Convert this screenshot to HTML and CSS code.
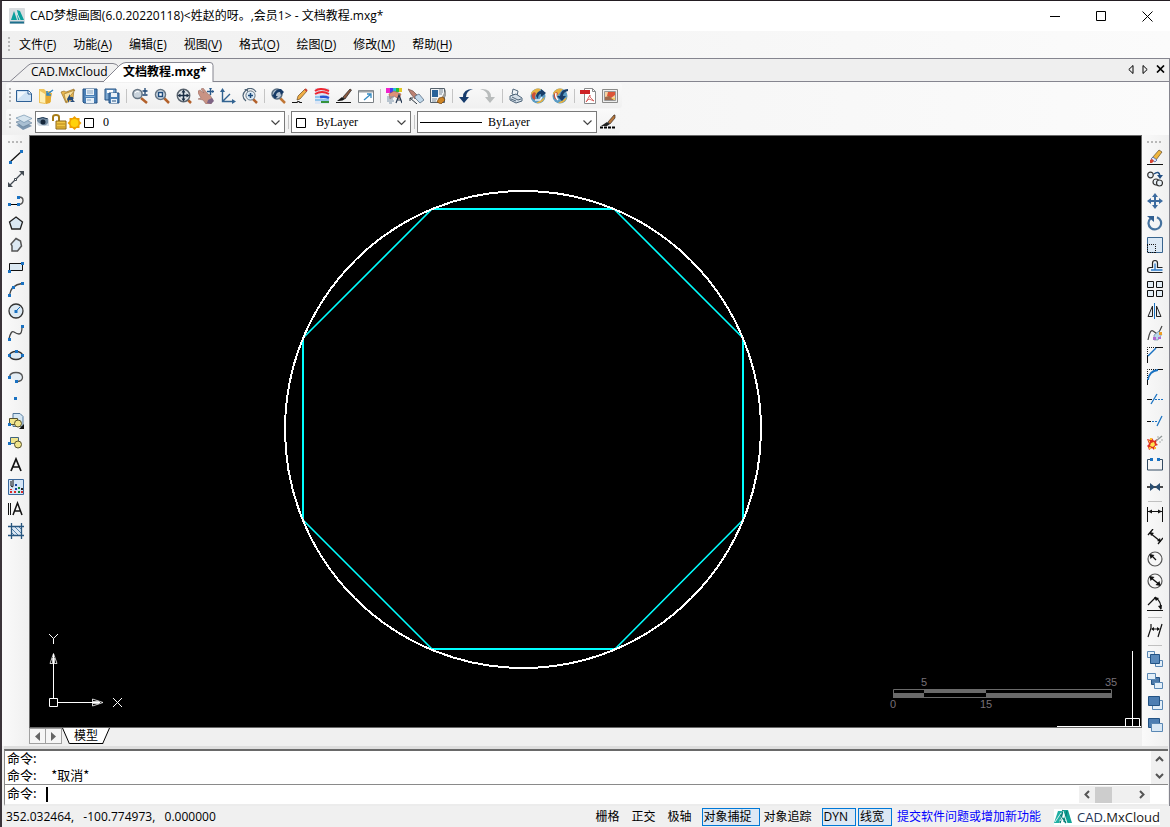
FILE: index.html
```html
<!DOCTYPE html>
<html lang="zh-CN">
<head>
<meta charset="utf-8">
<title>CAD梦想画图</title>
<link rel="stylesheet" href="styles.css">
</head>
<body>
<div class="window">
  <header class="titlebar">
    <svg class="app-icon" width="16" height="16" viewBox="0 0 16 16"><rect width="16" height="16" rx="1" fill="#d9dde0"/><path d="M1 13.500h14v2H1z" fill="#1c6f8d"/><path d="M2 12L5 3l3 9zM8 2l3 1-2 4zM8 7l3-4 4 9H9z" fill="#0c9f9c"/><path d="M7 3l4 9" stroke="#d5eeee"/></svg>
    <h1 class="title">CAD梦想画图(6.0.20220118)&lt;姓赵的呀。,会员1&gt; - 文档教程.mxg*</h1>
    <div class="window-buttons">
      <button aria-label="最小化"><svg width="11" height="11"><path d="M0 5.500h10" stroke="#000"/></svg></button>
      <button aria-label="最大化"><svg width="11" height="11"><path d="M.5.500h9v9h-9z" fill="none" stroke="#000"/></svg></button>
      <button aria-label="关闭"><svg width="11" height="11"><path d="M.5.500l10 10m0-10l-10 10" stroke="#000"/></svg></button>
    </div>
  </header>

  <nav class="menubar">
    <span class="grip grip-v"></span>
    <button>文件(<u>F</u>)</button><button>功能(<u>A</u>)</button><button>编辑(<u>E</u>)</button><button>视图(<u>V</u>)</button><button>格式(<u>O</u>)</button><button>绘图(<u>D</u>)</button><button>修改(<u>M</u>)</button><button>帮助(<u>H</u>)</button>
  </nav>

  <div class="frame">
    <div class="tabs">
      <button class="tab tab-idle"><svg class="tab-shape" width="115" height="19"><path d="M0 18.500L18 2.500Q20 .5 23 .5h80q4 0 6 4" fill="#f0f0f0" stroke="#85858f"/></svg><span>CAD.MxCloud</span></button>
      <button class="tab tab-active"><svg class="tab-shape" width="112" height="20"><path d="M0 20L17 3Q20 .5 23 .5h84q3 0 3 3V20" fill="#fff" stroke="#85858f"/></svg><span>文档教程.mxg*</span></button>
      <div class="tab-tools">
        <button aria-label="上一个"><svg width="6" height="9"><path d="M5 .5v8L.8 4.500z" fill="none" stroke="#000"/></svg></button>
        <button aria-label="下一个"><svg width="6" height="9"><path d="M1 .5v8l4.200-4z" fill="none" stroke="#000"/></svg></button>
        <button aria-label="关闭文档"><svg width="9" height="8"><path d="M1 .5l7 7m0-7l-7 7" stroke="#000" stroke-width="1.700"/></svg></button>
      </div>
    </div>

    <div class="toolbars">
      <div class="toolbar">
        <span class="grip grip-v"></span>
        <button aria-label="新建"><svg class="i" viewBox="0 0 16 16"><path d="M.5 2.500h12l3 3v8H.5z" fill="#cfe2f3" stroke="#2d5f95"/><path d="M2 4h8L2 11z" fill="#f1f7fc"/><path d="M12 2.500v3.500h3.500" fill="#fff" stroke="#2d5f95"/></svg></button>
        <button aria-label="打开"><svg class="i" viewBox="0 0 16 16"><path d="M1 1h5l2 2h5v11l-6 2-6-1z" fill="#eec45d"/><path d="M2 3l5 3v9l-5-1z" fill="#fff0b5"/><path d="M8 6l6-1-2 10-4 1z" fill="#e3a831"/><path d="M9 6.500L15 2M9 3v4h4" fill="none" stroke="#2f86c4" stroke-width="1.500"/></svg></button>
        <button aria-label="打开云图"><svg class="i" viewBox="0 0 16 16"><path d="M1 4l3-1 2 1 8-3-1 10-7 4z" fill="#e9b850" stroke="#8b6319" stroke-width=".6"/><path d="M4 6l11-4-4 5-5 7z" fill="#fbe2a0" stroke="#946b20" stroke-width=".6"/><path d="M7 11l3-5v3c3-1 4 1 3 3l2 2h-5l2-2H9v3z" fill="#264b78"/></svg></button>
        <button aria-label="保存"><svg class="i" viewBox="0 0 16 16"><path d="M1 1h14v14H2l-1-1z" fill="#4a7fb5" stroke="#245384"/><path d="M4 1h8v6H4zM4 10h8v5H4z" fill="#e9f1f8"/><path d="M5 3h6M5 5h6M5 12h4" stroke="#8ba9c6"/><path d="M3.500 8.500h9" stroke="#92bde2"/></svg></button>
        <button aria-label="另存为"><svg class="i" viewBox="0 0 16 16"><path d="M1 1h11v11H1z" fill="#7ba6cf" stroke="#245384"/><path d="M3 2h6v3H3z" fill="#fff"/><path d="M5 5h10v10H5z" fill="#4a7fb5" stroke="#245384"/><path d="M7 5h6v4H7zM7 11h6v4H7z" fill="#e9f1f8"/><path d="M8 13h4" stroke="#245384"/></svg></button>
        <span class="sep"></span>
        <button aria-label="实时缩放"><svg class="i" viewBox="0 0 16 16"><path d="M9 10l6 5" stroke="#b3612b" stroke-width="2.500"/><circle cx="5.500" cy="6" r="4.600" fill="#c9d3dc" stroke="#667583" stroke-width="1.500"/><path d="M3 5q2-3 4-1" stroke="#fff" fill="none"/><path d="M13 0v6M10.500 3h5M10.500 7h5" stroke="#1b426f" stroke-width="1.300"/></svg></button>
        <button aria-label="窗口缩放"><svg class="i" viewBox="0 0 16 16"><path d="M10 10l5 5" stroke="#b3612b" stroke-width="2.500"/><circle cx="6.500" cy="6.500" r="5" fill="#dce6ef" stroke="#667583" stroke-width="1.500"/><path d="M4.500 4.500h4v4h-4z" fill="#fff" stroke="#1d4b7c" stroke-width="1.500"/></svg></button>
        <button aria-label="范围缩放"><svg class="i" viewBox="0 0 16 16"><path d="M12 12l3 3" stroke="#b3612b" stroke-width="2.500"/><circle cx="7.500" cy="7.500" r="6.200" fill="#e2e7eb" stroke="#59636d" stroke-width="1.500"/><path d="M7.500 3v9M3 7.500h9" stroke="#1b2f45" stroke-width="1.500"/><path d="M7.500 1.500l2 3h-4zM7.500 13.500l2-3h-4zM1.500 7.500l3-2v4zM13.500 7.500l-3-2v4z" fill="#1b2f45"/></svg></button>
        <button aria-label="平移"><svg class="i" viewBox="0 0 16 16"><path d="M0 3l2-1 4 3-3-4 2-1 5 6 2 1 3 5-2 4H8l-3-4-5-1 3-1-3-5z" fill="#c99384" stroke="#8d625c" stroke-width=".5"/><path d="M10 12l4-2 2 3-3 3-4-1z" fill="#7e6485"/><path d="M12.500 0v7M9 3.500h7" stroke="#28598a" stroke-width="1.400"/><path d="M12.500-1l1.500 2h-3zM16 3.500L14 2v3z" fill="#28598a"/></svg></button>
        <button aria-label="坐标系"><svg class="i" viewBox="0 0 16 16"><path d="M2.500 2v11.500H14M3 13l7-7" fill="none" stroke="#326391" stroke-width="1.400"/><path d="M2.500 0L5 4H0zM16 13.500L12 11v5z" fill="#326391"/></svg></button>
        <button aria-label="缩放上一个"><svg class="i" viewBox="0 0 16 16"><path d="M11 11l4 4" stroke="#b3612b" stroke-width="2.500"/><circle cx="8.500" cy="7.500" r="4.600" fill="#dceaf5" stroke="#667583"/><path d="M8.500 5v5M6 7.500h5" stroke="#1d4b7c" stroke-width="1.500"/><path d="M4 2Q-2 8 4 13M5 1q6-2 9 3" fill="none" stroke="#4f6477" stroke-width="1.200"/><path d="M2 1h4v3z" fill="#4f6477"/></svg></button>
        <span class="sep"></span>
        <button aria-label="重生成"><svg class="i" viewBox="0 0 16 16"><path d="M9 9l6 6" stroke="#c07635" stroke-width="2.500"/><circle cx="7" cy="6" r="5" fill="#b5c3d1" stroke="#596d80" stroke-width="1.500"/><path d="M3 7q3-7 8-6l3 3-3 3-1-3q-4 0-4 4l2 0-3 3-3-4z" fill="#173b67"/></svg></button>
        <button aria-label="画笔"><svg class="i" viewBox="0 0 16 16"><path d="M0 14.500h5q1-2 3 0h2" fill="none" stroke="#151515" stroke-width="1.200"/><path d="M5 12l1-4 7-7 2 2-7 8z" fill="#f0ae45" stroke="#6c4b20" stroke-width=".7"/><path d="M13 1l2 2" stroke="#ca4135" stroke-width="2"/></svg></button>
        <button aria-label="图层颜色"><svg class="i" viewBox="0 0 16 16"><path d="M1 0h14v16H1z" fill="#dce6f5"/><path d="M1 3q5-4 14 0M1 6q7-4 14 0" stroke="#ef2630" stroke-width="2" fill="none"/><path d="M6 9q5-1 9 1" stroke="#2854d3" stroke-width="2.500" fill="none"/><path d="M1 9h5M1 12h14" stroke="#8fc4ec" stroke-width="2" fill="none"/><path d="M7 14h8" stroke="#35933c" stroke-width="2"/></svg></button>
        <button aria-label="线型画笔"><svg class="i" viewBox="0 0 16 16"><path d="M0 14h15v1H0zM1 13l5-4 3 2q-2 2-6 2z" fill="#161616"/><path d="M7 9l7-8 1.500 1L9 11z" fill="#8b5a40" stroke="#21201f" stroke-width=".7"/></svg></button>
        <button aria-label="缩放比例"><svg class="i" viewBox="0 0 16 16"><path d="M.5 2.500h15v12H.5z" fill="#fff" stroke="#7b8084"/><path d="M1 3.500h14" stroke="#9ea3a6" stroke-width="2"/><path d="M6 12l7-6M9 6h4v4" fill="none" stroke="#368bc3" stroke-width="1.300"/></svg></button>
        <span class="sep"></span>
        <button aria-label="文字样式"><svg class="i" viewBox="0 0 16 16"><path d="M0 0h4v5H0z" fill="#f024cb"/><path d="M4 0h3v5H4z" fill="#4f39f2"/><path d="M7 0h3v5H7z" fill="#23c2d7"/><path d="M10 0h3v4h-3z" fill="#28bd35"/><path d="M13 0h3v4h-3z" fill="#e2c725"/><path d="M3 6l5-3 7 3-2 5-5-3-4 3z" fill="#df9178" stroke="#9a594a" stroke-width=".6"/><path d="M1 9h7M1 11h6M1 13h7M3 15h3" stroke="#7d94aa"/><path d="M10 15l3-8 3 8M11 12h4" stroke="#263851" fill="none" stroke-width="1.200"/></svg></button>
        <button aria-label="特性匹配"><svg class="i" viewBox="0 0 16 16"><path d="M0 1l5 2 5 5-3 3-4-5z" fill="#bb8273" stroke="#705047" stroke-width=".7"/><path d="M7 8l4-2 5 6-4 3-5-5z" fill="#c1d8ea" stroke="#475f75" stroke-width=".7"/><path d="M2 10l7 6M2 10h3M2 10v3" stroke="#29333c"/></svg></button>
        <button aria-label="块编辑"><svg class="i" viewBox="0 0 16 16"><path d="M.5.500h14v14H.5z" fill="#f2f4f6" stroke="#56616b"/><path d="M2 2h6v7H2z" fill="#28629a"/><path d="M9 2h4M9 4h4M9 6h3M2 11h5M2 13h4" stroke="#7d8b98"/><path d="M12 9l4-8v7l-3 3z" fill="#9c9c99"/><path d="M7 14l2-4 4-1 2 3-4 4z" fill="#ce8525" stroke="#71410d" stroke-width=".7"/></svg></button>
        <span class="sep"></span>
        <button aria-label="撤销"><svg class="i" viewBox="0 0 16 16"><path d="M15 1Q5 1 5 9H1l5 6 5-6H8q0-6 7-8z" fill="#173c6d"/></svg></button>
        <button aria-label="重做"><svg class="i" viewBox="0 0 16 16"><path d="M0 1q11-1 11 8h4l-5 6-5-6h3Q8 3 0 1z" fill="#b9bcbc"/></svg></button>
        <span class="sep"></span>
        <button aria-label="打印"><svg class="i" viewBox="0 0 16 16"><path d="M5 1l5 2-1 5-5-2z" fill="#eef3f7" stroke="#546a7d"/><path d="M2 8l6-2 6 4v3l-6 2-6-3z" fill="#d5dfe8" stroke="#4d6479"/><path d="M4 9l6 3 3-1M3 11l5 2" stroke="#4d6479" fill="none"/></svg></button>
        <button aria-label="发布到网页"><svg class="i" viewBox="0 0 16 16"><circle cx="8" cy="8" r="7.500" fill="#5b9cc4"/><path d="M1 5q4-6 10-4L7 6l-4 4zM6 15q7 1 9-6l-4 3z" fill="#e6b243"/><path d="M3 11q-3-4 1-7l2 1q-2 4 0 7z" fill="#c84f3c"/><path d="M6 8q1-5 5-5V1l5 4-5 4V6q-3 0-3 5z" fill="#193e6a"/><path d="M5 12h5l2-3" stroke="#f0f4f6" stroke-width="1.500" fill="none"/></svg></button>
        <button aria-label="从网页打开"><svg class="i" viewBox="0 0 16 16"><circle cx="8" cy="8" r="7.500" fill="#5b9cc4"/><path d="M1 5q4-6 10-4L7 6l-4 4zM6 15q7 1 9-6l-4 3z" fill="#e6b243"/><path d="M3 11q-3-4 1-7l2 1q-2 4 0 7z" fill="#c84f3c"/><path d="M16 1q-7 0-8 7H5l5 5 4-5h-3q0-4 5-5z" fill="#193e6a"/><path d="M4 5q-1 4 2 7" stroke="#fff" fill="none" stroke-width="1.500"/></svg></button>
        <span class="sep"></span>
        <button aria-label="导出PDF"><svg class="i" viewBox="0 0 16 16"><path d="M4.500.500h8l3 3v12h-11z" fill="#fff" stroke="#898b8c"/><path d="M12.500.500v3h3" fill="none" stroke="#898b8c"/><path d="M0 2h10v4H0z" fill="#ce2125"/><path d="M6 14l4-7v2l4 4-5-2-3 3" fill="none" stroke="#d44c49" stroke-width=".8"/></svg></button>
        <button aria-label="导出图片"><svg class="i" viewBox="0 0 16 16"><path d="M.5 1.500h15v13H.5z" fill="#eee" stroke="#8b8b89"/><path d="M2.500 3.500h11v9h-11z" fill="#f5d3a4" stroke="#999"/><path d="M6 4h7v3L9 10 5 8z" fill="#dc5537"/><path d="M3 12V9l4-1 5 4z" fill="#a06a4c"/><path d="M9 10h4v2" fill="#f3d35e"/></svg></button>
      </div>
      <div class="toolbar toolbar-layer">
        <span class="grip grip-v"></span>
        <button aria-label="图层管理"><svg class="i" viewBox="0 0 16 16"><path d="M0 11l9-3 7 4-9 4z" fill="#7d97b0"/><path d="M0 8l9-3 7 4-9 4z" fill="#a9bfd2" stroke="#5f7b94" stroke-width=".6"/><path d="M0 4l8-3 8 3.500L8 8.500z" fill="#d6e4ee" stroke="#6386a4" stroke-width=".6"/></svg></button>
        <div class="combo combo-layer">
          <svg width="63" height="20" viewBox="0 0 63 20"><path d="M1 7h12v7H3l-2-2z" fill="#d2dce5"/><path d="M1 8q6-5 11 0v3l-2 2q-5 1-9-4z" fill="#748ca2"/><circle cx="7" cy="10" r="2.500" fill="#15263a"/><path d="M1 7q6-3 11 0" stroke="#15304c" fill="none"/><path d="M17 9V5q0-2 3-2t3 2v4" fill="none" stroke="#a67b16" stroke-width="2"/><path d="M20 9h10v8H20z" fill="#f0c645" stroke="#8c6415"/><path d="M21 12h8M21 15h8" stroke="#b6851f"/><path d="M38.500 4l2 2h3v3l2 2-2 2v3h-3l-2 2-2-2h-3v-3l-2-2 2-2V6h3z" fill="#ef9f00"/><circle cx="38.500" cy="11" r="4" fill="#ffd20a"/><path d="M48.500 6.500h9v9h-9z" fill="#fff" stroke="#000"/></svg>
          <select aria-label="图层"><option>0</option></select>
          <svg class="chev" width="9" height="6"><path d="M.5.500l4 4 4-4" fill="none" stroke="#444" stroke-width="1.200"/></svg>
        </div>
        <span class="sep"></span>
        <div class="combo combo-color">
          <svg width="20" height="20"><path d="M4.500 6.500h9v9h-9z" fill="#fff" stroke="#000"/></svg>
          <select aria-label="颜色"><option>ByLayer</option></select>
          <svg class="chev" width="9" height="6"><path d="M.5.500l4 4 4-4" fill="none" stroke="#444" stroke-width="1.200"/></svg>
        </div>
        <span class="sep"></span>
        <div class="combo combo-line">
          <svg width="66" height="20"><path d="M2 10.500h62" stroke="#000"/></svg>
          <select aria-label="线型"><option>ByLayer</option></select>
          <svg class="chev" width="9" height="6"><path d="M.5.500l4 4 4-4" fill="none" stroke="#444" stroke-width="1.200"/></svg>
        </div>
        <button aria-label="线型管理"><svg class="i" viewBox="0 0 16 16"><path d="M1 12l6-4 3 2-3 2z" fill="#222"/><path d="M8 8l6-7h1v3l-5 6z" fill="#b9773c" stroke="#3b2f27" stroke-width=".7"/><path d="M0 13.500h16" stroke="#000" stroke-width="2" stroke-dasharray="3 1"/></svg></button>
      </div>
    </div>

    <main class="work">
      <aside class="side side-left">
        <span class="grip grip-h"></span>
        <button aria-label="直线"><svg class="i" viewBox="0 0 16 16"><path d="M2 13L14 2" stroke="#111" stroke-width="1.300"/><path d="M1 12h3v3H1zM12 1h3v3h-3z" fill="#1a72c2"/></svg></button>
        <button aria-label="构造线"><svg class="i" viewBox="0 0 16 16"><path d="M2 14L14 2" stroke="#434b53" stroke-width="1.200"/><path d="M0 11v5h5zM11 0h5v5z" fill="#434b53"/><path d="M6.500 7.500h2v2h-2z" fill="#fff" stroke="#434b53"/></svg></button>
        <button aria-label="多段线"><svg class="i" viewBox="0 0 16 16"><path d="M11 4q4 0 4 3.500T11 11.500" fill="none" stroke="#555" stroke-width="1.400"/><path d="M2 11.500h8" stroke="#000"/><path d="M0 10h3v3H0zM9 10h3v3H9zM9 3h3v3H9z" fill="#1a72c2"/></svg></button>
        <button aria-label="多边形"><svg class="i" viewBox="0 0 16 16"><path d="M8 2l6.500 5-2.300 7H3.800L1.500 7z" fill="#dae8f3" stroke="#222" stroke-width="1.300"/></svg></button>
        <button aria-label="修订云线"><svg class="i" viewBox="0 0 16 16"><path d="M8 1.500l4.500 2.500 1 5-4 5H4V9l-1-2z" fill="#dce8f2" stroke="#555" stroke-width="1.500"/></svg></button>
        <button aria-label="矩形"><svg class="i" viewBox="0 0 16 16"><path d="M1.500 4.500h13v7h-13z" fill="#dce9f3" stroke="#111"/><path d="M0 11h3v3H0zM13 3h3v3h-3z" fill="#1a72c2"/></svg></button>
        <button aria-label="圆弧"><svg class="i" viewBox="0 0 16 16"><path d="M1.500 14Q3 4 14 2.500" fill="none" stroke="#444" stroke-width="1.300"/><path d="M0 13h3v3H0zM4 5h3v3H4zM13 1h3v3h-3z" fill="#1a72c2"/></svg></button>
        <button aria-label="圆"><svg class="i" viewBox="0 0 16 16"><circle cx="8" cy="8" r="7" fill="#dce9f3" stroke="#333" stroke-width="1.300"/><path d="M8 8l4-4" stroke="#1a72c2"/><path d="M6.500 7h3v3h-3z" fill="#1a72c2"/></svg></button>
        <button aria-label="样条曲线"><svg class="i" viewBox="0 0 16 16"><path d="M1 14Q3 5 6 7t5 2q3 0 3-7" fill="none" stroke="#444" stroke-width="1.300"/><path d="M0 13h3v3H0zM13 0h3v3h-3z" fill="#1a72c2"/></svg></button>
        <button aria-label="椭圆"><svg class="i" viewBox="0 0 16 16"><ellipse cx="8" cy="8.500" rx="6.500" ry="4" fill="#dce9f3" stroke="#333" stroke-width="1.300"/><path d="M0 7h3v3H0zM13 7h3v3h-3zM7 3h3v3H7z" fill="#1a72c2"/></svg></button>
        <button aria-label="椭圆弧"><svg class="i" viewBox="0 0 16 16"><path d="M1.500 8Q2 3.500 8 3.500T14.500 8 8 12.500" fill="#e4edf4" stroke="#555" stroke-width="1.300"/><path d="M0 7h3v3H0zM7 11h3v3H7z" fill="#1a72c2"/></svg></button>
        <button aria-label="点"><svg class="i" viewBox="0 0 16 16"><path d="M6 6h3v3H6z" fill="#1a72c2"/></svg></button>
        <button aria-label="插入块"><svg class="i" viewBox="0 0 16 16"><path d="M5 .5h7l3 3v10H5z" fill="#d4e6f3" stroke="#51779a"/><path d="M1.500 5.500h8v6h-8z" fill="#f0e58c" stroke="#56512b"/><circle cx="10" cy="10.500" r="3.500" fill="#f0e58c" stroke="#56512b"/><path d="M0 10h3v3H0z" fill="#1a72c2"/><path d="M16 11v5h-5z" fill="#111"/></svg></button>
        <button aria-label="创建块"><svg class="i" viewBox="0 0 16 16"><path d="M2.500 2.500h8v6h-8z" fill="#f0e58c" stroke="#41647e"/><circle cx="10" cy="9.500" r="3.500" fill="#f0e58c" stroke="#56512b"/><path d="M0 7h3v3H0z" fill="#1a72c2"/></svg></button>
        <button aria-label="文字"><svg class="i" viewBox="0 0 16 16"><path d="M3 14L8 2l5 12M4.500 10h7" fill="none" stroke="#111" stroke-width="1.700"/></svg></button>
        <button aria-label="属性"><svg class="i" viewBox="0 0 16 16"><path d="M.5.500h15v15H.5z" fill="#d5e5f6" stroke="#39679b"/><path d="M3 2v5q2 2 2 0V1" stroke="#111" fill="none"/><path d="M7 5h2v2H7zM7 9h2v2H7z" fill="#1546a0"/><path d="M10 8h2v2h-2zM10 12h2v2h-2z" fill="#168338"/><path d="M2 10h2v1H2zM2 12h2v2H2zM6 12h2v2H6zM13 12h2v2h-2z" fill="#d92a28"/><path d="M13 9h2v2h-2z" fill="#222"/></svg></button>
        <button aria-label="多行文字"><svg class="i" viewBox="0 0 16 16"><path d="M.5 2v12M2.500 2v12" stroke="#111"/><path d="M5 14l4.500-12L14 14M6.500 10h6" fill="none" stroke="#111" stroke-width="1.500"/></svg></button>
        <button aria-label="图案填充"><svg class="i" viewBox="0 0 16 16"><path d="M3 3h11v10H3z" fill="#dce8f4"/><path d="M3 5l8 8M3 9l4 4M6 3l8 8M10 3l4 4" stroke="#5483ad"/><path d="M0 3.500h16M0 12.500h16M3.500 0v16M13.500 0v16" stroke="#28567f" stroke-width="1.300"/></svg></button>
      </aside>

      <section class="stage">
        <div class="canvas">
          <svg class="drawing" width="100%" height="100%">
            <g fill="none" stroke="#0ff">
              <path stroke-width="2" shape-rendering="crispEdges" d="M402 73h182M713 202v182M585 513H402M273 384V202"/>
              <path stroke-width="1.600" d="M584 73l129 129M713 384L585 513M402 513L273 384M273 202L402 73"/>
            </g>
            <ellipse cx="493" cy="293.500" rx="238" ry="238.500" fill="none" stroke="#fff" stroke-width="2" shape-rendering="crispEdges"/>
            <g fill="none" stroke="#fff"><path d="M19.500 562.500h8v8h-8zM23.500 562V518M28 566.500h42"/><path stroke-width=".8" d="M23.500 517.500l-3.500 10h7zM73 566.500l-10.500-3.500v7zM22.500 522v5M24.500 522v5M63 565.500h6M63 567.500h6"/><path d="M19 498l4.500 4.500L28 498M23.500 502.500V508M83 562l9 9M92 562l-9 9"/></g>
          </svg>
          <svg class="overlay" width="260" height="80">
            <path d="M12.500 42.500h218v8h-218z" fill="none" stroke="#6a6a6a"/>
            <path d="M12 46h31v5H12zM43 42h62v4H43zM105 46h126v5H105z" fill="#6a6a6a"/>
            <g class="scale-text" fill="#777078" text-anchor="middle"><text x="43" y="39">5</text><text x="230" y="39">35</text><text x="12" y="61">0</text><text x="105" y="61">15</text></g>
            <path d="M251.500 4v76M176 79.500h84M244.500 79V71.500h14V79" fill="none" stroke="#fff"/>
          </svg>
        </div>
        <div class="sheets">
          <button class="step" aria-label="向前"><svg width="5" height="9"><path d="M5 0v9L0 4.500z" fill="#666"/></svg></button>
          <button class="step" aria-label="向后"><svg width="5" height="9"><path d="M0 0v9l5-4.500z" fill="#666"/></svg></button>
          <button class="sheet"><svg class="sheet-shape" width="48" height="16"><path d="M.5 0l7 15.500h33L47.500 0" fill="#fff"/><path d="M.5 0l7 16M40.500 16L47.500 0M8 15.500h33" fill="none" stroke="#000"/></svg><span>模型</span></button>
        </div>
      </section>

      <aside class="side side-right">
        <span class="grip grip-h"></span>
        <button aria-label="删除"><svg class="i" viewBox="0 0 16 16"><path d="M0 15.500h16" stroke="#111"/><path d="M5 9l7-8 3 2-6 8z" fill="#f0b63d" stroke="#5d4b2d" stroke-width=".7"/><path d="M6 8l4 3-2 2-4-3z" fill="#dfe6f6" stroke="#4b65a5" stroke-width=".8"/><path d="M3 11l2-1 2 2-2 2H3z" fill="#d94432"/></svg></button>
        <button aria-label="复制"><svg class="i" viewBox="0 0 16 16"><g fill="#e9f0f6" stroke="#333" stroke-width="1.200"><circle cx="3.500" cy="4" r="2.800"/><circle cx="9" cy="11" r="3"/><circle cx="12.500" cy="12" r="3"/></g><path d="M7 3q5-4 6 2" fill="none" stroke="#214e83" stroke-width="1.500"/><path d="M10 4h6l-3 4z" fill="#214e83"/></svg></button>
        <button aria-label="移动"><svg class="i" viewBox="0 0 16 16"><path d="M8 2v12M2 8h12" stroke="#3d6ca0" stroke-width="2"/><path d="M8 0l3 4H5zM8 16l3-4H5zM0 8l4-3v6zM16 8l-4-3v6z" fill="#3d6ca0"/></svg></button>
        <button aria-label="旋转"><svg class="i" viewBox="0 0 16 16"><path d="M10 2.200A6.300 6.300 0 1 1 3.500 3.500" fill="none" stroke="#46739f" stroke-width="2.200"/><path d="M0 1h7v6z" fill="#315f91"/></svg></button>
        <button aria-label="缩放"><svg class="i" viewBox="0 0 16 16"><path d="M.5.500h15v15H.5z" fill="#dce9f5" stroke="#38658f"/><path d="M0 7.500h8.500V16" fill="none" stroke="#111" stroke-dasharray="1 1"/><path d="M.5 8v7.500H8" fill="none" stroke="#111" stroke-dasharray="1 1"/></svg></button>
        <button aria-label="偏移"><svg class="i" viewBox="0 0 16 16"><path d="M15.500 13.500H3q-2.500 0-2.500-2.500T3 8.500h2.500V4Q5.500 1.500 8 1.500T10.500 4v4.500h5" fill="#eef4f9" stroke="#222" stroke-width="1.200"/><path d="M15.500 11H4M8 11V4.500" fill="none" stroke="#2a78c7" stroke-width="1.300"/></svg></button>
        <button aria-label="阵列"><svg class="i" viewBox="0 0 16 16"><path d="M.5.500h6v6h-6zM9.500.500h6v6h-6zM.5 9.500h6v6h-6zM9.500 9.500h6v6h-6z" fill="#e2edf5" stroke="#111"/></svg></button>
        <button aria-label="镜像"><svg class="i" viewBox="0 0 16 16"><path d="M5.500 3v10.500H1zM9.500 3v10.500H14z" fill="#e5edf4" stroke="#222"/><path d="M7.500 0v16" stroke="#1a72c2"/></svg></button>
        <button aria-label="编辑曲线"><svg class="i" viewBox="0 0 16 16"><path d="M1 15Q3 4 6 6t4 3 5-8" fill="none" stroke="#444" stroke-width="1.200"/><path d="M7 10l5-4 3 3-4 6H7z" fill="#b9d7ea" stroke="#40627d" stroke-width=".5"/><path d="M12 7h3v3h-3z" fill="#ed9d24"/><path d="M6 12h3v3H6zM11 12h3v2h-3z" fill="#b06ad0"/></svg></button>
        <button aria-label="倒角"><svg class="i" viewBox="0 0 16 16"><path d="M.5 7V.5H8" fill="none" stroke="#111" stroke-dasharray="1 1"/><path d="M8 .5h8M.5 8v8" stroke="#111"/><path d="M1 9L9 1" stroke="#1a72c2" stroke-width="1.500"/></svg></button>
        <button aria-label="圆角"><svg class="i" viewBox="0 0 16 16"><path d="M.5 9V.5H9" fill="none" stroke="#111" stroke-dasharray="1 1"/><path d="M10 .5h6M.5 10v6" stroke="#111"/><path d="M1 11Q2 2 11 1" fill="none" stroke="#1a72c2" stroke-width="1.800"/></svg></button>
        <button aria-label="修剪"><svg class="i" viewBox="0 0 16 16"><path d="M0 8.500h5" stroke="#111"/><path d="M8 8.500h8" stroke="#1a72c2" stroke-dasharray="2 1"/><path d="M4 13l6-10" stroke="#1a72c2" stroke-width="1.300"/></svg></button>
        <button aria-label="延伸"><svg class="i" viewBox="0 0 16 16"><path d="M0 8.500h4" stroke="#111"/><path d="M5 8.500h6" stroke="#1a72c2" stroke-dasharray="2 1"/><path d="M10 13l5-10" stroke="#1a72c2" stroke-width="1.300"/></svg></button>
        <button aria-label="分解"><svg class="i" viewBox="0 0 16 16"><path d="M0 4l4 1 1-2 2 3 3-2-1 4 2 2-3 1-1 4-2-2-3 2-1-3-1-1 2-2z" fill="#df3022"/><path d="M4 8l3-1 1 3-2 2-3-1zM1 5l2 1v2z" fill="#ffe34f"/><path d="M2 13h2M7 13h2M3 4h2" stroke="#ffbb2f" stroke-width="2"/><path d="M9 6l6-5" stroke="#8e9595" stroke-width="1.300"/><path d="M10 2h2M14 5h2M12 7h2" stroke="#a8adad"/></svg></button>
        <button aria-label="打断"><svg class="i" viewBox="0 0 16 16"><path d="M4 2.500H.500v10.500h15V2.500H13" fill="none" stroke="#334b62"/><path d="M3 1h3v3H3zM10 1h3v3h-3z" fill="#1a72c2"/></svg></button>
        <button aria-label="合并"><svg class="i" viewBox="0 0 16 16"><path d="M0 8h16" stroke="#111" stroke-width="1.500"/><path d="M3 4l5 4-5 4zM13 4L8 8l5 4z" fill="#2a4d70"/></svg></button>
        <span class="rule"></span>
        <button aria-label="线性标注"><svg class="i" viewBox="0 0 16 16"><path d="M.5 0v15M15.500 0v15M1 4.500h14" stroke="#111"/><path d="M1 4.500l4-2v4zM15 4.500l-4-2v4z" fill="#111"/></svg></button>
        <button aria-label="对齐标注"><svg class="i" viewBox="0 0 16 16"><path d="M6 0L1 6M16 9l-5 6M3 4l10 8" stroke="#111" stroke-width="1.300"/><path d="M3 3l4 1-3 3zM14 13l-4-1 3-3z" fill="#111"/></svg></button>
        <button aria-label="半径标注"><svg class="i" viewBox="0 0 16 16"><circle cx="8" cy="8" r="7" fill="#f7f7f7" stroke="#555" stroke-width="1.200"/><path d="M4 4l5 5" stroke="#111" stroke-width="1.300"/><path d="M2.500 3l5 1-4 4z" fill="#111"/></svg></button>
        <button aria-label="直径标注"><svg class="i" viewBox="0 0 16 16"><circle cx="8" cy="8" r="7" fill="#f7f7f7" stroke="#555" stroke-width="1.200"/><path d="M3 4l10 8" stroke="#111" stroke-width="1.500"/><path d="M2.500 3l5 1-4 4zM13.500 13l-5-1 4-4z" fill="#111"/></svg></button>
        <button aria-label="角度标注"><svg class="i" viewBox="0 0 16 16"><path d="M0 15.500h16M1 10l8-8M9 3q5 3 5 11" fill="none" stroke="#111" stroke-width="1.200"/><path d="M7 2l5 1-3 3zM14 15l-3-4 4-1z" fill="#111"/></svg></button>
        <span class="rule"></span>
        <button aria-label="编辑标注"><svg class="i" viewBox="0 0 16 16"><path d="M4 1v4L1 14M15 1L11 14M5 6h7" stroke="#111" fill="none" stroke-width="1.200"/><path d="M4 6l3-2v4zM13 6l-3-2v4z" fill="#111"/></svg></button>
        <span class="rule"></span>
        <button aria-label="前置"><svg class="i" viewBox="0 0 16 16"><path d="M.5.500h7v6h-7zM8.500 9.500h7v6h-7z" fill="#e3eff8" stroke="#5a88b4"/><path d="M3.500 3.500h9v9h-9z" fill="#5a8abb" stroke="#235384"/></svg></button>
        <button aria-label="后置"><svg class="i" viewBox="0 0 16 16"><path d="M4.500 4.500h8v7h-8z" fill="#4d7aaa" stroke="#235384"/><path d="M.5.500h8v6h-8zM7.500 9.500h8v6h-8z" fill="#e3eff8" stroke="#5a88b4"/></svg></button>
        <button aria-label="置于对象之上"><svg class="i" viewBox="0 0 16 16"><path d="M5.500 5.500h10v9h-10z" fill="#e3eff8" stroke="#5a88b4"/><path d="M1.500 1.500h11v9h-11z" fill="#4d7eb2" stroke="#235384"/></svg></button>
        <button aria-label="置于对象之下"><svg class="i" viewBox="0 0 16 16"><path d="M1.500 1.500h11v9h-11z" fill="#4d7eb2" stroke="#235384"/><path d="M4.500 6.500h11v8h-11z" fill="#d8e8f5" stroke="#5a88b4"/></svg></button>
      </aside>
    </main>

    <section class="console">
      <div class="history">
        <pre>命令:
命令:     *取消*</pre>
        <div class="vscroll"><button aria-label="向上滚动"><svg width="9" height="6"><path d="M1 5l3.500-3.500L8 5" fill="none" stroke="#555" stroke-width="2"/></svg></button><button aria-label="向下滚动"><svg width="9" height="6"><path d="M1 1l3.500 3.500L8 1" fill="none" stroke="#555" stroke-width="2"/></svg></button></div>
      </div>
      <div class="prompt">
        <label for="cmd">命令:</label><span class="caret"></span><input id="cmd" type="text">
        <div class="hscroll"><button aria-label="向左滚动"><svg width="6" height="9"><path d="M5 1L1.500 4.500 5 8" fill="none" stroke="#555" stroke-width="2"/></svg></button><span class="thumb"></span><button class="right" aria-label="向右滚动"><svg width="6" height="9"><path d="M1 1l3.500 3.500L1 8" fill="none" stroke="#555" stroke-width="2"/></svg></button></div>
      </div>
    </section>
  </div>

  <footer class="status">
    <output class="coords">352.032464,&nbsp;&nbsp; -100.774973,&nbsp;&nbsp; 0.000000</output>
    <div class="modes">
      <button>栅格</button><button>正交</button><button>极轴</button><button class="on">对象捕捉</button><button>对象追踪</button><button class="on">DYN</button><button class="on">线宽</button>
    </div>
    <a class="feedback" href="#">提交软件问题或增加新功能</a>
    <div class="brand"><svg width="18" height="15" viewBox="0 0 18 15"><path d="M4 2h4l-3 12H0z" fill="#1fb0a3"/><path d="M9 1h5l4 13h-5z" fill="#12a396"/><path d="M6 5l6 9M9 1L6 14M13 2l-3 11" stroke="#0a7f78" stroke-width="1.500"/><path d="M1 13L7 4M9 2l4 12M6 12l3-5" stroke="#d9f3f0"/></svg><span>CAD<b>.MxCloud</b></span></div>
  </footer>
</div>
</body>
</html>
```

FILE: styles.css
```css
* { box-sizing: border-box; }

body {
  margin: 0;
  font: 12px/16px "Open Sans", "Noto Sans CJK SC", sans-serif;
  color: #000;
  background: #f0f0f0;
}

button, select, input {
  font: inherit;
  color: inherit;
  border: 0;
  padding: 0;
  margin: 0;
  background: none;
}

svg { display: block; flex: none; }

.window {
  height: 100vh;
  display: flex;
  flex-direction: column;
  border-top: 1px solid #231d22;
  border-left: 2px solid #3b343a;
  overflow: hidden;
}

.titlebar {
  flex: none;
  height: 30px;
  display: flex;
  align-items: center;
  padding-left: 7px;
  background: #fff;
}
.title {
  flex: 1;
  margin: 0 0 0 5px;
  font-size: 12px;
  font-weight: 400;
  white-space: nowrap;
}
.window-buttons { display: flex; height: 100%; }
.window-buttons button {
  width: 46px;
  display: flex;
  align-items: center;
  justify-content: center;
}

.menubar {
  flex: none;
  height: 27px;
  display: flex;
  align-items: center;
  gap: 1px;
  padding-left: 6px;
  background: linear-gradient(90deg, #f0f0f0, #fbfbfb);
}
.menubar button { padding: 0 8px; white-space: nowrap; }
.menubar u { text-underline-offset: 2px; }

.grip { flex: none; }
.grip-v {
  width: 2px;
  height: 15px;
  background: repeating-linear-gradient(180deg, #b8b8b8 0 2px, transparent 2px 4px);
}
.grip-h {
  width: 15px;
  height: 2px;
  background: repeating-linear-gradient(90deg, #b8b8b8 0 2px, transparent 2px 4px);
}

.frame {
  flex: 1;
  min-height: 0;
  display: flex;
  flex-direction: column;
  border-top: 1px solid #85858f;
  border-right: 1px solid #85858f;
}

.tabs {
  flex: none;
  height: 23px;
  display: flex;
  align-items: flex-end;
  padding-left: 8px;
  border-bottom: 1px solid #85858f;
  background: #efefef;
}
.tab {
  position: relative;
  height: 20px;
  padding-top: 2px;
  text-align: left;
  white-space: nowrap;
}
.tab span { position: relative; }
.tab-shape { position: absolute; left: 0; bottom: -1px; }
.tab-idle { width: 93px; padding-left: 21px; }
.tab-active { width: 112px; padding-left: 20px; font-weight: 700; }
.tab-tools {
  margin-left: auto;
  height: 100%;
  display: flex;
  align-items: center;
  gap: 8px;
  padding: 0 4px 2px 0;
}

.toolbars {
  flex: none;
  height: 53px;
  padding: 1px 4px 0;
  display: flex;
  flex-direction: column;
  align-items: flex-start;
  gap: 1px;
  background: linear-gradient(90deg, #f0f0f0, #fbfbfb);
}
.toolbar {
  height: 25px;
  display: flex;
  align-items: center;
  padding: 0 1px 0 3px;
  border-radius: 3px;
  background: linear-gradient(#fafafa, #f0f0f0);
}
.toolbar button {
  width: 22px;
  height: 22px;
  display: flex;
  align-items: center;
  justify-content: center;
}
.toolbar .grip-v { margin-right: 2px; }
.i { width: 16px; height: 16px; }
.sep {
  width: 6px;
  height: 14px;
  background: linear-gradient(#c4c4c4, #c4c4c4) center / 1px 100% no-repeat;
}

.combo {
  position: relative;
  height: 22px;
  display: flex;
  align-items: center;
  border: 1px solid #7a7a7a;
  background: #fff;
  font: 12px/16px "Liberation Serif", serif;
}
.combo select {
  flex: 1;
  min-width: 0;
  height: 20px;
  padding-left: 4px;
  appearance: none;
}
.chev { position: absolute; right: 4px; top: 8px; pointer-events: none; }
.combo-layer { width: 250px; }
.combo-color { width: 120px; }
.combo-line { width: 180px; }

.work { flex: 1; min-height: 0; display: flex; background: #f0f0f0; }
.side {
  flex: none;
  width: 27px;
  display: flex;
  flex-direction: column;
  align-items: center;
  padding-top: 6px;
  background: linear-gradient(90deg, #fafafa, #f0f0f0);
}
.side-right { padding-right: 2px; }
.side button {
  width: 22px;
  height: 22px;
  flex: none;
  display: flex;
  align-items: center;
  justify-content: center;
}
.side .grip-h { margin-bottom: 3px; }
.rule {
  flex: none;
  width: 14px;
  height: 6px;
  background: linear-gradient(#c0c0c0, #c0c0c0) center / 100% 1px no-repeat;
}

.stage { flex: 1; min-width: 0; display: flex; flex-direction: column; }
.canvas {
  flex: 1;
  min-height: 0;
  position: relative;
  border: 1px solid #696969;
  background: #000;
  overflow: hidden;
}
.drawing { position: absolute; inset: 0; }
.overlay { position: absolute; right: 0; bottom: 0; }
.scale-text { font: 11px "Liberation Sans", sans-serif; }

.sheets { flex: none; height: 18px; display: flex; align-items: flex-start; }
.step {
  width: 16px;
  height: 16px;
  display: flex;
  align-items: center;
  justify-content: center;
  border: 1px solid #a0a0a0;
  border-left-width: 0;
  background: #f6f6f6;
}
.step:first-child { width: 17px; border-left-width: 1px; }
.sheet { position: relative; width: 48px; height: 16px; }
.sheet-shape { position: absolute; left: 0; top: 0; }
.sheet span { position: relative; }

.console {
  flex: none;
  margin: 0 1px 0 2px;
  border-top: 3px solid #dedede;
  background: #fff;
  font: 13px/17px "Noto Sans CJK SC", sans-serif;
}
.history {
  display: flex;
  justify-content: space-between;
  height: 36px;
  border: 1px solid #8a8a8a;
  border-top: 2px solid #696969;
  border-right: 0;
}
.history pre { margin: -2px 0 0 2px; font: inherit; }
.vscroll { width: 17px; display: flex; flex-direction: column; background: #f0f0f0; }
.vscroll button { flex: 1; display: flex; align-items: center; justify-content: center; }
.prompt {
  height: 21px;
  display: flex;
  align-items: center;
  border-left: 1px solid #8a8a8a;
  border-bottom: 2px solid #ececec;
  padding: 0 18px 0 2px;
}
.prompt label { width: 39px; padding-bottom: 4px; }
.caret { width: 2px; height: 15px; background: #000; }
.prompt input { flex: 1; min-width: 0; outline: 0; }
.hscroll { width: 71px; height: 17px; display: flex; align-items: center; background: #f0f0f0; }
.hscroll button { width: 16px; display: flex; justify-content: center; }
.hscroll .right { margin-left: auto; }
.thumb { width: 17px; height: 16px; background: #cdcdcd; }

.status {
  flex: none;
  height: 21px;
  display: flex;
  align-items: center;
  padding: 0 10px 0 4px;
  white-space: nowrap;
}
.coords { margin-right: auto; }
.modes { display: flex; }
.modes button { height: 18px; padding: 0 8px 0 4px; line-height: 18px; }
.modes .on {
  margin-left: 2px;
  padding: 0 7px 0 1px;
  border: 1px solid #0078d7;
  background: #dce8f4;
  line-height: 16px;
}
.feedback { margin-left: 5px; color: #00f; text-decoration: none; }
.brand {
  display: flex;
  align-items: center;
  gap: 5px;
  margin-left: 13px;
  background: #fff;
  font-size: 13px;
  color: #1f3558;
}
.brand b { font-weight: 500; color: #161616; }
```
